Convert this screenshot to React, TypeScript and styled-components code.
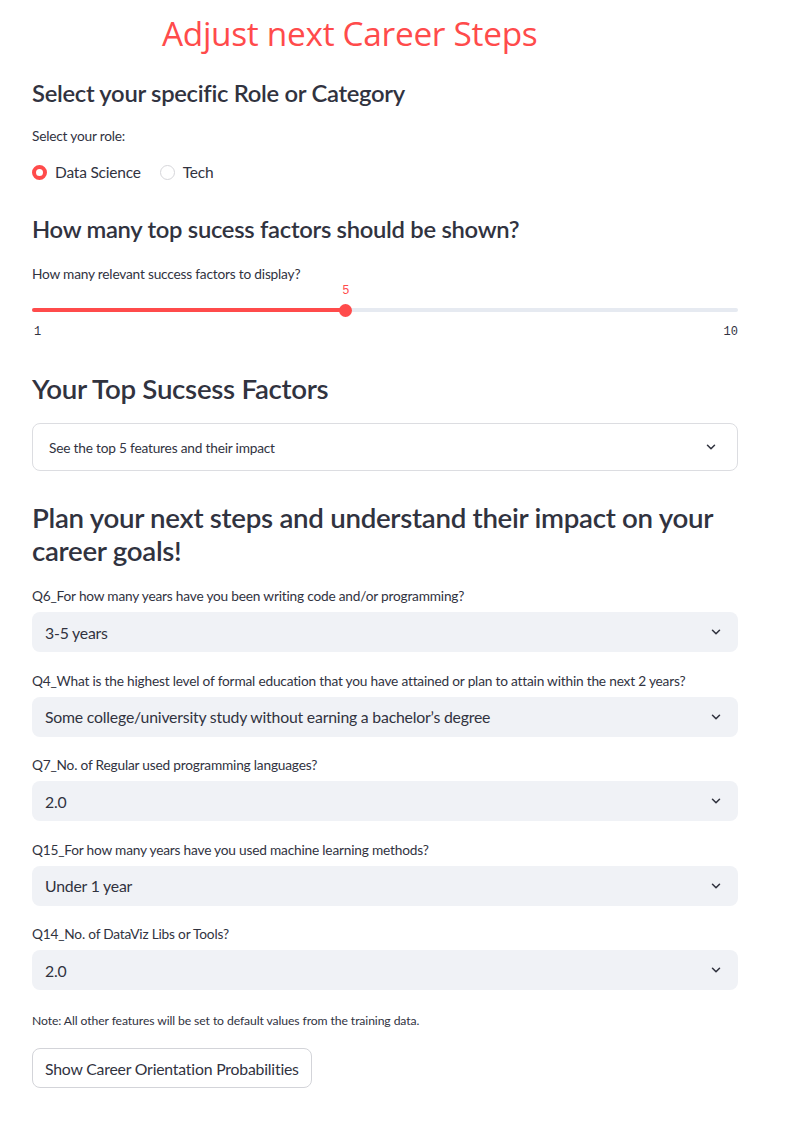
import React from "react";
import styled, { createGlobalStyle } from "styled-components";

const Global = createGlobalStyle`
  html, body { margin: 0; padding: 0; background: #ffffff; }
  body { font-family: Lato, "Noto Sans", sans-serif; color: #31333f; }
`;

const Page = styled.div`
  width: 794px;
  padding: 15px 56px 40px 32px;
  box-sizing: border-box;
  display: flex;
  flex-direction: column;
`;

const Title = styled.h1`
  margin: 0 0 0 130px;
  font-family: "Open Sans", sans-serif;
  font-weight: 400;
  font-size: 33.4px;
  line-height: 36px;
  color: #ff4b4b;
  letter-spacing: -0.3px;
`;

const H3 = styled.h3<{ $top: number }>`
  margin: ${(p) => p.$top}px 0 0 0;
  font-family: Lato, sans-serif;
  font-weight: 600;
  font-size: 23.8px;
  line-height: 28px;
  color: #31333f;
  letter-spacing: -0.3px;
`;

const H2 = styled.h2<{ $top: number }>`
  margin: ${(p) => p.$top}px 0 0 0;
  font-family: Lato, sans-serif;
  font-weight: 600;
  font-size: 27.7px;
  line-height: 33px;
  color: #31333f;
  letter-spacing: -0.3px;
`;

const Label = styled.div<{ $top: number }>`
  margin-top: ${(p) => p.$top}px;
  font-size: 13.7px;
  line-height: 16px;
  color: #31333f;
  letter-spacing: -0.2px;
`;

const RadioRow = styled.div`
  display: flex;
  align-items: center;
  gap: 19px;
  margin-top: 18px;
  height: 20px;
`;

const RadioItem = styled.label`
  display: flex;
  align-items: center;
  gap: 8px;
  font-size: 15.5px;
  color: #31333f;
  letter-spacing: -0.2px;
`;

const RadioDot = styled.span<{ $on?: boolean }>`
  width: 15px;
  height: 15px;
  border-radius: 50%;
  box-sizing: border-box;
  background: #fff;
  border: ${(p) => (p.$on ? "4.5px solid #ff4b4b" : "1.5px solid #d6d6da")};
`;

const SliderWrap = styled.div`
  position: relative;
  height: 60px;
`;

const Track = styled.div`
  position: absolute;
  left: 0;
  right: 0;
  top: 26px;
  height: 4px;
  border-radius: 2px;
  background: #e6eaf1;
`;

const Fill = styled.div`
  position: absolute;
  left: 0;
  top: 0;
  height: 4px;
  border-radius: 2px;
  background: #ff4b4b;
`;

const Thumb = styled.div`
  position: absolute;
  top: -4.5px;
  width: 13px;
  height: 13px;
  margin-left: -6.5px;
  border-radius: 50%;
  background: #ff4b4b;
`;

const ThumbValue = styled.div`
  position: absolute;
  top: 2px;
  transform: translateX(-50%);
  font-family: "Liberation Mono", monospace;
  font-size: 12px;
  line-height: 14px;
  color: #ff4b4b;
`;

const Tick = styled.div<{ $right?: boolean }>`
  position: absolute;
  top: 43px;
  ${(p) => (p.$right ? "right: 0;" : "left: 2px;")}
  font-family: "Liberation Mono", monospace;
  font-size: 12px;
  line-height: 14px;
  color: #31333f;
`;

const Expander = styled.div`
  margin-top: 18px;
  height: 48px;
  border: 1px solid #dcdde1;
  border-radius: 8px;
  box-sizing: border-box;
  display: flex;
  align-items: center;
  justify-content: space-between;
  padding: 0 19px 0 16px;
  font-size: 13.7px;
  letter-spacing: -0.2px;
  color: #31333f;
`;

const SelectBox = styled.div`
  margin-top: 8px;
  height: 40px;
  border-radius: 8px;
  background: #f0f2f6;
  display: flex;
  align-items: center;
  justify-content: space-between;
  padding: 0 15px 0 13px;
  font-size: 15.8px;
  letter-spacing: -0.2px;
  color: #31333f;
`;

const Note = styled.div`
  margin-top: 23px;
  font-size: 12.2px;
  line-height: 16px;
  letter-spacing: -0.1px;
  color: #31333f;
`;

const Button = styled.button`
  margin-top: 19px;
  align-self: flex-start;
  height: 40px;
  padding: 0 12px;
  border: 1px solid #d3d4d9;
  border-radius: 8px;
  background: #fff;
  font-family: Lato, sans-serif;
  font-size: 15.8px;
  letter-spacing: -0.2px;
  color: #31333f;
`;

const Chevron = () => (
  <svg width="14" height="14" viewBox="0 0 24 24" fill="none" stroke="#31333f" strokeWidth="2.6" strokeLinecap="round" strokeLinejoin="round">
    <path d="M6 9l6 6 6-6" />
  </svg>
);

const questions = [
  ["Q6_For how many years have you been writing code and/or programming?", "3-5 years"],
  ["Q4_What is the highest level of formal education that you have attained or plan to attain within the next 2 years?", "Some college/university study without earning a bachelor’s degree"],
  ["Q7_No. of Regular used programming languages?", "2.0"],
  ["Q15_For how many years have you used machine learning methods?", "Under 1 year"],
  ["Q14_No. of DataViz Libs or Tools?", "2.0"],
];

export default function App() {
  const pct = ((5 - 1) / 9) * 100;
  return (
    <>
      <Global />
      <Page>
        <Title>Adjust next Career Steps</Title>
        <H3 $top={28}>Select your specific Role or Category</H3>
        <Label $top={21}>Select your role:</Label>
        <RadioRow>
          <RadioItem><RadioDot $on />Data Science</RadioItem>
          <RadioItem><RadioDot />Tech</RadioItem>
        </RadioRow>
        <H3 $top={33}>How many top sucess factors should be shown?</H3>
        <Label $top={23}>How many relevant success factors to display?</Label>
        <SliderWrap>
          <ThumbValue style={{ left: `${pct}%` }}>5</ThumbValue>
          <Track>
            <Fill style={{ width: `${pct}%` }} />
            <Thumb style={{ left: `${pct}%` }} />
          </Track>
          <Tick>1</Tick>
          <Tick $right>10</Tick>
        </SliderWrap>
        <H2 $top={30}>Your Top Sucsess Factors</H2>
        <Expander>
          <span>See the top 5 features and their impact</span>
          <Chevron />
        </Expander>
        <H2 $top={30}>Plan your next steps and understand their impact on your career goals!</H2>
        {questions.map(([q, a], i) => (
          <React.Fragment key={q}>
            <Label $top={i === 0 ? 21 : 20.5}>{q}</Label>
            <SelectBox>
              <span>{a}</span>
              <Chevron />
            </SelectBox>
          </React.Fragment>
        ))}
        <Note>Note: All other features will be set to default values from the training data.</Note>
        <Button>Show Career Orientation Probabilities</Button>
      </Page>
    </>
  );
}
